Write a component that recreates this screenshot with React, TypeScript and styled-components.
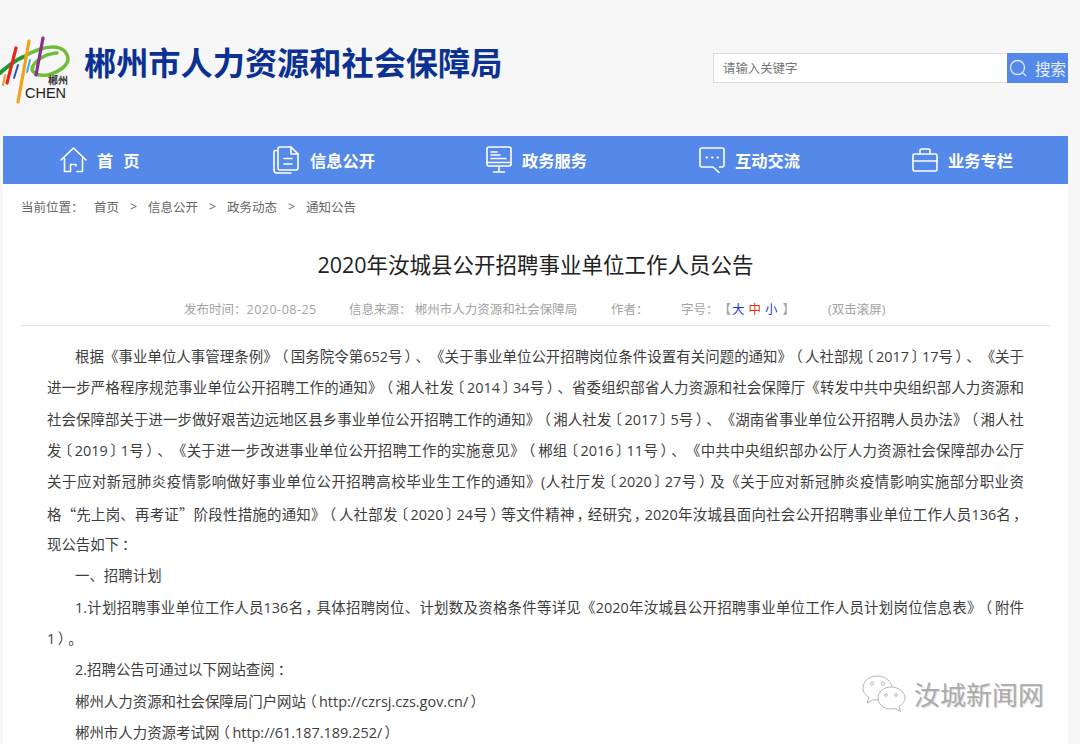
import React from "react";
import styled, { createGlobalStyle } from "styled-components";

const Global = createGlobalStyle`
  html, body { margin: 0; padding: 0; background: #f7f7f7; }
  body {
    width: 1080px;
    height: 744px;
    overflow: hidden;
    font-family: "Open Sans", "Noto Sans CJK SC", sans-serif;
    text-spacing-trim: space-all;
  }
`;

const Page = styled.div`
  width: 1080px;
  height: 744px;
  position: relative;
  overflow: hidden;
`;

const Header = styled.header`
  height: 136px;
  display: flex;
  align-items: center;
  padding: 0 12px 4px 0;
  box-sizing: border-box;
`;

const Logo = styled.div`
  width: 70px;
  height: 70px;
  flex: none;
  margin-top: 8px;
`;

const LogoSvg = styled.svg`
  display: block;
`;

const SiteName = styled.h1`
  margin: 0 0 6px 14px;
  font-size: 32.2px;
  line-height: 40px;
  font-weight: 700;
  color: #0b3192;
  white-space: nowrap;
  flex: 1;
`;

const Search = styled.form`
  display: flex;
  width: 355px;
  height: 30px;
  margin: 4px 0 0;
  box-sizing: border-box;
`;

const SearchField = styled.div`
  flex: 1;
  background: #fff;
  border: 1px solid #dcdcdc;
  border-right: none;
  padding-left: 9px;
  font-size: 12.4px;
  line-height: 29px;
  color: #777;
`;

const SearchButton = styled.div`
  width: 61px;
  background: #5589e9;
  color: #e6eefc;
  display: flex;
  align-items: center;
  padding-left: 2px;
  gap: 7px;
  font-size: 15.5px;
  box-sizing: border-box;
`;

const Sheet = styled.main`
  margin-left: 3px;
  width: 1065px;
  background: #fff;
  height: 608px;
`;

const Nav = styled.nav`
  display: grid;
  grid-template-columns: repeat(5, 213px);
  height: 48px;
  background: #5589e9;
`;

const NavItem = styled.div`
  display: flex;
  align-items: center;
  padding-left: 57px;
  gap: 10px;
  color: #fff;
  font-size: 16.25px;
  font-weight: 700;
`;

const Spaced = styled.span`
  letter-spacing: 10px;
`;

const Crumbs = styled.div`
  display: flex;
  align-items: center;
  height: 44px;
  padding-left: 18px;
  font-size: 12.5px;
  color: #666;
  white-space: nowrap;
`;

const CrumbLabel = styled.span`
  width: 73px;
`;

const CrumbSep = styled.span`
  width: 29px;
  text-align: center;
`;

const Title = styled.h2`
  margin: 0;
  padding-top: 17px;
  text-align: center;
  font-size: 21.5px;
  line-height: 40px;
  font-weight: 400;
  color: #222;
`;

const Meta = styled.div`
  margin: 0 18px;
  height: 41px;
  border-bottom: 1px solid #e6e6e6;
  box-sizing: border-box;
  padding: 15px 0 0 163px;
  display: flex;
  font-size: 12.5px;
  line-height: 20px;
  color: #a3a3a3;
  white-space: nowrap;
`;

const MetaItem = styled.span<{ $w: number }>`
  width: ${(p) => p.$w}px;
  flex: none;
`;

const MetaDate = styled.span`
  letter-spacing: 0.5px;
`;

const SizeGroup = styled.span`
  margin: 0 3px 0 -1px;
`;

const Size = styled.span<{ $c: string }>`
  color: ${(p) => p.$c};
  margin: 0 2px;
`;

const Article = styled.article`
  padding: 15px 0 0 72px;
  font-size: 14.45px;
  line-height: 31.35px;
  color: #3d3d3d;
  white-space: nowrap;
`;

const TextLine = styled.div<{ $hang: boolean; $full: boolean }>`
  height: 31.35px;
  margin-left: ${(p) => (p.$hang ? "-28px" : "0")};
  width: ${(p) => (p.$hang ? "977px" : "949px")};
  text-align: ${(p) => (p.$full ? "justify" : "left")};
  text-align-last: ${(p) => (p.$full ? "justify" : "left")};
`;

const Punct = styled.span`
  display: inline-block;
  width: 0.9em;
  line-height: 1;
  text-align: center;
  text-align-last: center;
  font-family: "Noto Sans CJK SC", sans-serif;
  font-feature-settings: "palt";
`;

const Quote = styled.span`
  font-family: "Noto Sans CJK SC", sans-serif;
`;

const Mark = styled.div`
  position: absolute;
  left: 862px;
  top: 675px;
  display: flex;
  align-items: center;
  gap: 8px;
  font-size: 26px;
  color: #acacac;
  text-shadow: 1px 1px 0 #ddd;
  white-space: nowrap;
`;

const ico = { fill: "none", stroke: "#fff", strokeWidth: 1.6, strokeLinecap: "round", strokeLinejoin: "round" } as const;

const Home = () => (
  <svg width="27" height="26" viewBox="0 0 27 26" {...ico}>
    <path d="M1 13L13.500 1 26 13" />
    <path d="M4.500 11.500V24.500H10.500V17.500H16V19" />
    <path d="M22.500 11.500V24.500H17" />
  </svg>
);
const Docs = () => (
  <svg width="27" height="28" viewBox="0 0 27 28" {...ico}>
    <path d="M4 4.500H2.500A1.500 1.500 0 0 0 1 6V24A3 3 0 0 0 4 27H18" />
    <path d="M5 3A2 2 0 0 1 7 1H18L25 8V22A2 2 0 0 1 23 24H7A2 2 0 0 1 5 22Z" />
    <path d="M18 1V8H25M11 12.500H19M11 18H19" />
  </svg>
);
const Screen = () => (
  <svg width="26" height="28" viewBox="0 0 26 28" {...ico}>
    <rect x="1" y="1" width="24" height="19" rx="2" />
    <path d="M1 16.500H25M5 6H11M5 9H14M5 12.500H20M13 20.500V25M7.500 26H18.500" />
  </svg>
);
const Chat = () => (
  <svg width="26" height="26" viewBox="0 0 26 26" {...ico}>
    <path d="M14 20H3A2 2 0 0 1 1 18V3A2 2 0 0 1 3 1H23A2 2 0 0 1 25 3V18A2 2 0 0 1 23 20H20.500M14 20L20 25.500" />
    <path d="M7.500 10.500H8M13 10.500H13.500M18.500 10.500H19" strokeWidth="2" />
  </svg>
);
const Case = () => (
  <svg width="26" height="24" viewBox="0 0 26 24" {...ico}>
    <rect x="1" y="6" width="24" height="17" rx="1.500" />
    <path d="M8 6V2.500A1.500 1.500 0 0 1 9.500 1H16.500A1.500 1.500 0 0 1 18 2.500V6M1 13H25" />
  </svg>
);

const Wechat = () => (
  <svg width="44" height="38" viewBox="0 0 44 38" fill="#fff" stroke="#b5b5b5" strokeWidth="1">
    <path d="M15 1C7 1 1 6.500 1 13C1 17 3.500 20.500 7 22.500L5 28L11.500 24.500C13 25 14.500 25 16 25C23 25 30 20 30 13C30 6.500 23 1 15 1Z" />
    <path d="M29 12C21.500 12 16 17 16 23C16 29 21.500 34 29 34C30.500 34 31.500 33.800 33 33.300L38.500 36.500L37 31.300C40.500 29.300 43 26.500 43 23C43 17 36.500 12 29 12Z" />
    <circle cx="10" cy="8.500" r="1.600" />
    <circle cx="21" cy="8.500" r="1.600" />
    <circle cx="24" cy="20" r="1.300" />
    <circle cx="34" cy="20" r="1.300" />
  </svg>
);

const LogoMark = () => (
  <LogoSvg width="70" height="70" viewBox="0 0 70 70" fill="none" strokeLinecap="round">
    <path d="M0 38C8 31 15 25 23 22C33 16 45 12 53 12C62 12 68 17 68 25C66 33 58 37 48 40C40 41 34 39 32 35C32 29 38 24 47 20C51 19 54 18 57 18" stroke="#6fbe3a" strokeWidth="3.500" />
    <path d="M0 38C8 31 15 25 23 22" stroke="#1e9a30" strokeWidth="3.800" />
    <path d="M16 13L7 48" stroke="#e8251f" strokeWidth="3.200" />
    <path d="M5 40L3 50" stroke="#e8a23a" strokeWidth="2.200" />
    <path d="M29 6L18 67" stroke="#f3a11c" strokeWidth="3.200" />
    <path d="M18 30L14 43" stroke="#2257b5" strokeWidth="2" />
    <path d="M30 25L27 37" stroke="#43a8dc" strokeWidth="2" />
    <path d="M43 3L36 40" stroke="#8b2b94" strokeWidth="3.200" />
    <text x="48" y="49" fontSize="10" fontWeight="700" fill="#333" fontFamily="Noto Sans CJK SC, sans-serif">郴州</text>
    <text x="25" y="63" fontSize="14.500" fill="#222" fontFamily="Liberation Sans, sans-serif">CHEN</text>
  </LogoSvg>
);

const lines = [
  "根据《事业单位人事管理条例》（国务院令第652号）、《关于事业单位公开招聘岗位条件设置有关问题的通知》（人社部规〔2017〕17号）、《关于",
  "进一步严格程序规范事业单位公开招聘工作的通知》（湘人社发〔2014〕34号）、省委组织部省人力资源和社会保障厅《转发中共中央组织部人力资源和",
  "社会保障部关于进一步做好艰苦边远地区县乡事业单位公开招聘工作的通知》（湘人社发〔2017〕5号）、《湖南省事业单位公开招聘人员办法》（湘人社",
  "发〔2019〕1号）、《关于进一步改进事业单位公开招聘工作的实施意见》（郴组〔2016〕11号）、《中共中央组织部办公厅人力资源社会保障部办公厅",
  "关于应对新冠肺炎疫情影响做好事业单位公开招聘高校毕业生工作的通知》(人社厅发〔2020〕27号）及《关于应对新冠肺炎疫情影响实施部分职业资",
  "格“先上岗、再考证”阶段性措施的通知》（人社部发〔2020〕24号）等文件精神，经研究，2020年汝城县面向社会公开招聘事业单位工作人员136名，",
  "现公告如下：",
  "一、招聘计划",
  "1.计划招聘事业单位工作人员136名，具体招聘岗位、计划数及资格条件等详见《2020年汝城县公开招聘事业单位工作人员计划岗位信息表》（附件",
  "1）。",
  "2.招聘公告可通过以下网站查阅：",
  "郴州人力资源和社会保障局门户网站（http://czrsj.czs.gov.cn/）",
  "郴州市人力资源考试网（http://61.187.189.252/）",
];
const outdented = new Set([1, 2, 3, 4, 5, 6, 9]);
const fullWidth = new Set([0, 1, 2, 3, 4, 5, 8]);

const renderLine = (text: string) =>
  text.split(/([（）〔〕，：“”])/).map((part, i) => {
    if (/^[（）〔〕，：]$/.test(part)) return <Punct key={i}>{part}</Punct>;
    if (/^[“”]$/.test(part)) return <Quote key={i}>{part}</Quote>;
    return part;
  });

export default function App() {
  return (
    <Page>
      <Global />
      <Header>
        <Logo><LogoMark /></Logo>
        <SiteName>郴州市人力资源和社会保障局</SiteName>
        <Search>
          <SearchField>请输入关键字</SearchField>
          <SearchButton>
            <svg width="19" height="19" viewBox="0 0 19 19" fill="none" stroke="#dfe8fb" strokeWidth="1.300">
              <circle cx="8.500" cy="8.500" r="7" />
              <path d="M14 14L17 17" />
            </svg>
            搜索
          </SearchButton>
        </Search>
      </Header>
      <Sheet>
        <Nav>
          <NavItem><Home /><Spaced>首页</Spaced></NavItem>
          <NavItem><Docs />信息公开</NavItem>
          <NavItem><Screen />政务服务</NavItem>
          <NavItem><Chat />互动交流</NavItem>
          <NavItem><Case />业务专栏</NavItem>
        </Nav>
        <Crumbs>
          <CrumbLabel>当前位置：</CrumbLabel>
          <span>首页</span>
          <CrumbSep>&gt;</CrumbSep>
          <span>信息公开</span>
          <CrumbSep>&gt;</CrumbSep>
          <span>政务动态</span>
          <CrumbSep>&gt;</CrumbSep>
          <span>通知公告</span>
        </Crumbs>
        <Title>2020年汝城县公开招聘事业单位工作人员公告</Title>
        <Meta>
          <MetaItem $w={165}>发布时间：<MetaDate>2020-08-25</MetaDate></MetaItem>
          <MetaItem $w={262}>信息来源： 郴州市人力资源和社会保障局</MetaItem>
          <MetaItem $w={70}>作者：</MetaItem>
          <MetaItem $w={147}>字号：【<SizeGroup><Size $c="#1a3ad8">大</Size><Size $c="#e03010">中</Size><Size $c="#1a3ad8">小</Size></SizeGroup>】</MetaItem>
          <MetaItem $w={70}>(双击滚屏)</MetaItem>
        </Meta>
        <Article>
          {lines.map((t, i) => (
            <TextLine key={i} $hang={outdented.has(i)} $full={fullWidth.has(i)}>
              {renderLine(t)}
            </TextLine>
          ))}
        </Article>
      </Sheet>
      <Mark><Wechat />汝城新闻网</Mark>
    </Page>
  );
}
